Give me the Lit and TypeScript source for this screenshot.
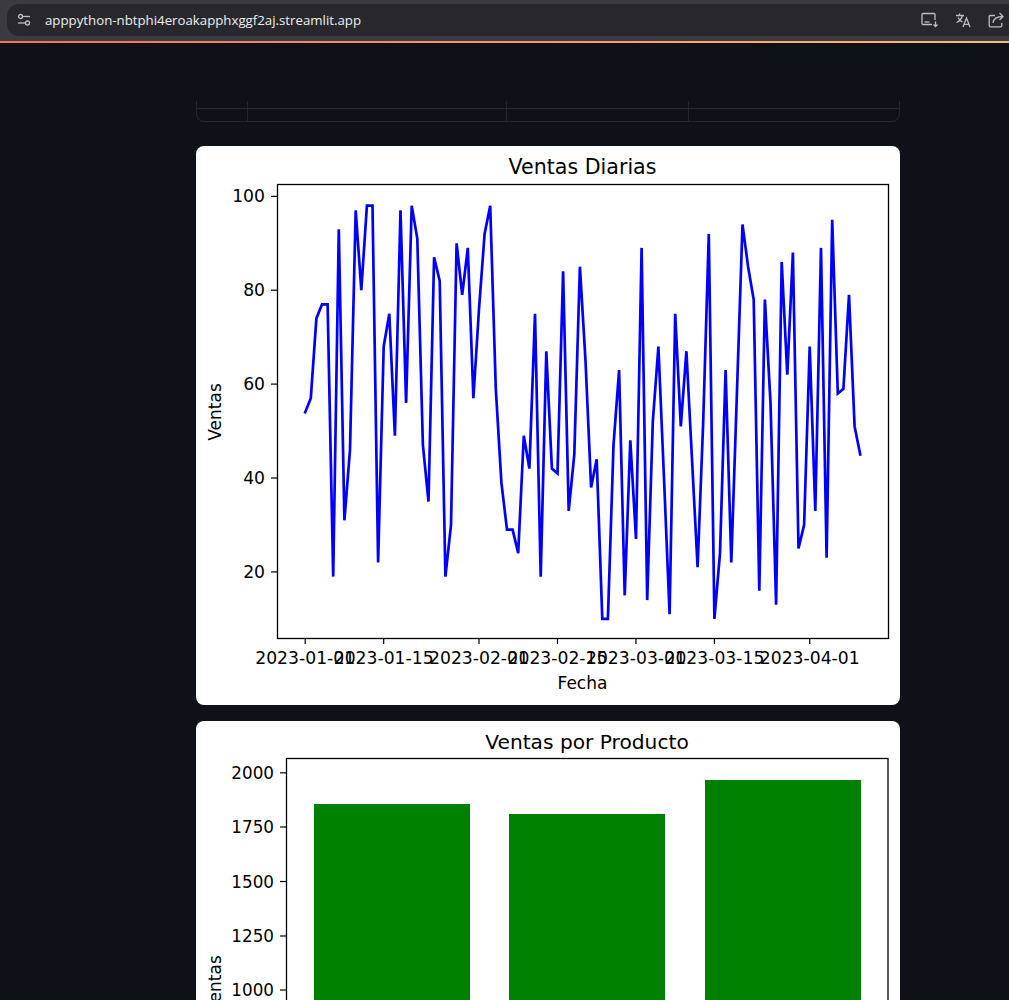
import { LitElement, html, svg, css } from "lit";
import { customElement } from "lit/decorators.js";

const SALES = [54,57,74,77,77,19,93,31,46,97,80,98,98,22,68,75,49,97,56,98,91,47,35,87,82,19,30,90,79,89,57,76,92,98,59,39,29,29,24,49,42,75,19,67,42,41,84,33,45,85,65,38,44,10,10,47,63,15,48,27,89,14,52,68,40,11,75,51,67,44,21,52,92,10,24,63,22,58,94,85,78,16,78,56,13,86,62,88,25,30,68,33,89,23,95,58,59,79,51,45];
const X0 = 305.2, DX = 5.606;
const dayX = (i: number) => X0 + DX * i;
const lineY = (v: number) => 196.3 + (100 - v) * 4.695;
const DATES: [number, string][] = [[0,"2023-01-01"],[14,"2023-01-15"],[31,"2023-02-01"],[45,"2023-02-15"],[59,"2023-03-01"],[73,"2023-03-15"],[90,"2023-04-01"]];
const BARS: [number, number][] = [[314,804],[509,814],[705,780]];
const BAR_TICKS: [number, number][] = [[2000,772.8],[1750,827],[1500,881.5],[1250,936],[1000,990]];

@customElement("app-root")
export class AppRoot extends LitElement {
  static styles = css`
    :host { display: block; width: 1009px; height: 1000px; overflow: hidden; background: #0e1117; }
    .chrome { height: 41px; background: #3b3b3f; padding: 4px 0 5px 7px; box-sizing: border-box; }
    .omni { height: 32px; background: #28282c; border-radius: 12px 0 0 12px; display: flex; align-items: center; padding-left: 10px; color: #eceef2; font: 13.25px "Open Sans", "Noto Sans", sans-serif; }
    .omni .url { margin-left: 14px; flex: 1; }
    .tools { display: flex; align-items: center; gap: 16px; margin-right: 4px; }
    .tools svg, .tune { display: block; fill: none; stroke: #bdbdc0; stroke-width: 1.3; }
    .rainbow { height: 2px; background: linear-gradient(90deg, #fb6f5c, #ffbf66); }
    main { padding: 58px 109px 0 196px; display: flex; flex-direction: column; }
    .table { height: 21px; box-sizing: border-box; border: 1px solid #25282e; border-top: 0; border-radius: 0 0 8px 8px; display: grid; grid-template-columns: 50px 259px 182px 1fr; }
    .cell { position: relative; border-left: 1px solid #25282e; }
    .cell:first-child { border-left: 0; }
    .cell::after { content: ""; position: absolute; left: 0; right: 0; top: 7px; border-top: 1px solid #25282e; }
    .card { background: #fff; border-radius: 8px; overflow: hidden; flex: none; }
    .first { margin-top: 24px; }
    .second { margin-top: 16px; }
    .card svg { display: block; width: 704px; height: 559px; }
    text { font-family: "DejaVu Sans", sans-serif; fill: #000; }
    .tick { font-size: 17.2px; }
    .label { font-size: 17px; }
    .title { font-size: 20.6px; }
    .second .tick { font-size: 16.8px; }
    .second .title { font-size: 20.2px; }
    .frame { fill: none; stroke: #000; stroke-width: 1.3; }
    .mark { stroke: #000; stroke-width: 1.2; }
    .series { fill: none; stroke: #00f; stroke-width: 2.7; stroke-linejoin: miter; stroke-linecap: square; }
    .bar { fill: #008000; }
  `;

  private lineChart() {
    const pts = SALES.map((v, i) => `${dayX(i).toFixed(1)},${lineY(v).toFixed(1)}`).join(" ");
    return html`<svg viewBox="196 146 704 559">
      ${svg`
      <text class="title" x="582.5" y="174" text-anchor="middle">Ventas Diarias</text>
      <polyline class="series" points=${pts}></polyline>
      <rect class="frame" x="277.5" y="184.5" width="611" height="454"></rect>
      ${[100, 80, 60, 40, 20].map((v) => svg`
        <line class="mark" x1="271" x2="277" y1=${lineY(v)} y2=${lineY(v)}></line>
        <text class="tick" x="265" y=${lineY(v) + 6} text-anchor="end">${v}</text>`)}
      ${DATES.map(([i, d]) => svg`
        <line class="mark" x1=${dayX(i)} x2=${dayX(i)} y1="638" y2="644"></line>
        <text class="tick" x=${dayX(i)} y="664" text-anchor="middle">${d}</text>`)}
      <text class="label" x="582.5" y="689" text-anchor="middle">Fecha</text>
      <text class="label" transform="translate(221 412) rotate(-90)" text-anchor="middle">Ventas</text>
      `}
    </svg>`;
  }

  private barChart() {
    return html`<svg viewBox="196 721 704 559">
      ${svg`
      <text class="title" x="587" y="749" text-anchor="middle">Ventas por Producto</text>
      ${BARS.map(([x, top]) => svg`<rect class="bar" x=${x} y=${top} width="156" height=${1280 - top}></rect>`)}
      <rect class="frame" x="286.5" y="758.5" width="601.5" height="600"></rect>
      ${BAR_TICKS.map(([v, y]) => svg`
        <line class="mark" x1="280" x2="286" y1=${y} y2=${y}></line>
        <text class="tick" x="274" y=${y + 6} text-anchor="end">${v}</text>`)}
      <text class="label" transform="translate(221 984) rotate(-90)" text-anchor="middle">Ventas</text>
      `}
    </svg>`;
  }

  render() {
    return html`
      <div class="chrome">
        <div class="omni">
          <svg class="tune" width="14" height="14" viewBox="0 0 14 14">
            <circle cx="3.5" cy="3.5" r="2"></circle><path d="M6 3.5h7"></path>
            <circle cx="10.5" cy="10" r="2"></circle><path d="M1 10h7"></path>
          </svg>
          <span class="url">apppython-nbtphi4eroakapphxggf2aj.streamlit.app</span>
          <div class="tools">
            <svg width="18" height="16" viewBox="0 0 18 16">
              <path d="M11 12.500H2q-1 0-1-1V2.500q0-1 1-1h11q1 0 1 1V8"></path><path d="M3.500 10h5"></path><path d="M14.500 9.500v5M12.500 12.500l2 2 2-2"></path>
            </svg>
            <svg width="17" height="16" viewBox="0 0 17 16">
              <path d="M1 3.500h8M4.500 1.500v2M7.500 3.500C6.500 7 4 9.500 1.500 10.500M3 5.500c1 2 2.500 3.500 4.500 4.500"></path><path d="M8 15l3.500-9 3.500 9M9.200 12.300h4.600"></path>
            </svg>
            <svg width="17" height="16" viewBox="0 0 17 16">
              <path d="M7 3.500H2.500q-1.300 0-1.300 1.300v8.700q0 1.300 1.300 1.300h10q1.300 0 1.300-1.300V11"></path><path d="M5 11c.5-4.500 3.500-6.500 10-6.500M11.500 1l3.500 3.500L11.500 8"></path>
            </svg>
          </div>
        </div>
      </div>
      <div class="rainbow"></div>
      <main>
        <div class="table"><div class="cell"></div><div class="cell"></div><div class="cell"></div><div class="cell"></div></div>
        <div class="card first">${this.lineChart()}</div>
        <div class="card second">${this.barChart()}</div>
      </main>
    `;
  }
}
